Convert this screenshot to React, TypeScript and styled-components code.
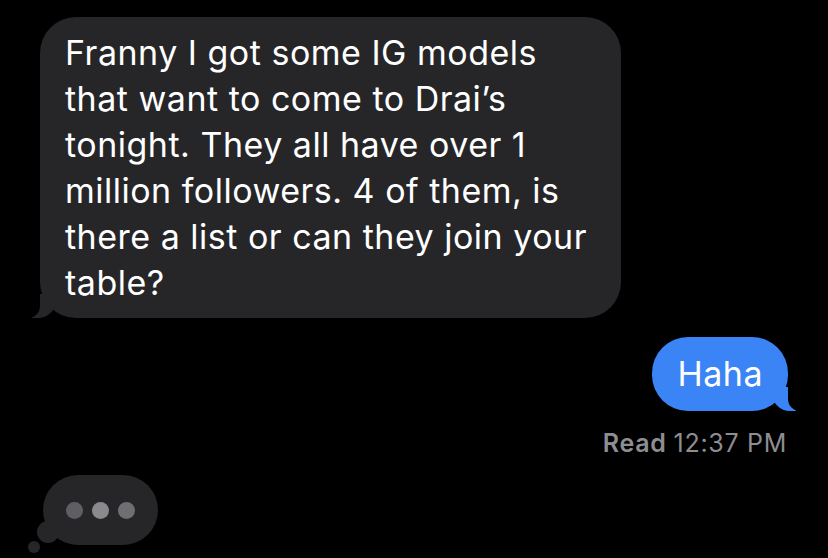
import styled, { createGlobalStyle } from "styled-components";

const GlobalStyle = createGlobalStyle`
  html, body {
    margin: 0;
    padding: 0;
    background: #000;
  }
  body {
    font-family: Inter, "Liberation Sans", Arial, sans-serif;
    -webkit-font-smoothing: antialiased;
  }
`;

const Screen = styled.div`
  width: 828px;
  height: 558px;
  background: #000;
  display: flex;
  flex-direction: column;
  padding: 17px 40px 0 40px;
  box-sizing: border-box;
  overflow: hidden;
`;

const Row = styled.div<{ $mine?: boolean }>`
  display: flex;
  justify-content: ${(p) => (p.$mine ? "flex-end" : "flex-start")};
  margin-top: ${(p) => (p.$mine ? "19px" : "0")};
`;

const Bubble = styled.div<{ $mine?: boolean }>`
  position: relative;
  background: ${(p) => (p.$mine ? "#3b84f6" : "#262629")};
  color: #fff;
  font-size: 34px;
  line-height: 46px;
  letter-spacing: 0.5px;
  padding: ${(p) => (p.$mine ? "14px 25px 14px 25px" : "13px 34px 12px 25px")};
  border-radius: 36px;

  &::before {
    content: "";
    position: absolute;
    bottom: 0;
    ${(p) => (p.$mine ? "right: -8px;" : "left: -8px;")}
    width: 24px;
    height: 24px;
    background: ${(p) => (p.$mine ? "#3b84f6" : "#262629")};
    ${(p) =>
      p.$mine
        ? "border-bottom-left-radius: 18px;"
        : "border-bottom-right-radius: 18px;"}
  }

  &::after {
    content: "";
    position: absolute;
    bottom: 0;
    ${(p) => (p.$mine ? "right: -20px;" : "left: -20px;")}
    width: 20px;
    height: 26px;
    background: #000;
    ${(p) =>
      p.$mine
        ? "border-bottom-left-radius: 12px;"
        : "border-bottom-right-radius: 12px;"}
  }
`;

const Receipt = styled.div`
  align-self: flex-end;
  margin-top: 17px;
  margin-right: 1px;
  font-size: 25px;
  line-height: 30px;
  letter-spacing: 0.7px;
  color: #8d8d92;
  b {
    font-weight: 600;
    margin-right: 7px;
  }
`;

const Typing = styled.div`
  position: relative;
  margin-top: 17px;
  margin-left: 3px;
  width: 115px;
  height: 70px;
  border-radius: 35px;
  background: #262629;
  display: flex;
  align-items: center;
  justify-content: center;
  gap: 9px;

  &::before {
    content: "";
    position: absolute;
    left: -6px;
    bottom: 2px;
    width: 22px;
    height: 22px;
    border-radius: 50%;
    background: #262629;
  }

  &::after {
    content: "";
    position: absolute;
    left: -15px;
    bottom: -8px;
    width: 12px;
    height: 12px;
    border-radius: 50%;
    background: #262629;
  }
`;

const Dot = styled.span<{ $shade: string }>`
  width: 17px;
  height: 17px;
  border-radius: 50%;
  background: ${(p) => p.$shade};
`;

export default function App() {
  return (
    <>
      <GlobalStyle />
      <Screen>
        <Row>
          <Bubble>
            Franny I got some IG models
            <br />
            that want to come to Drai’s
            <br />
            tonight. They all have over 1
            <br />
            million followers. 4 of them, is
            <br />
            there a list or can they join your
            <br />
            table?
          </Bubble>
        </Row>
        <Row $mine>
          <Bubble $mine>Haha</Bubble>
        </Row>
        <Receipt>
          <b>Read</b>12:37 PM
        </Receipt>
        <Typing>
          <Dot $shade="#5f5f63" />
          <Dot $shade="#8a8a8e" />
          <Dot $shade="#6f6f73" />
        </Typing>
      </Screen>
    </>
  );
}
